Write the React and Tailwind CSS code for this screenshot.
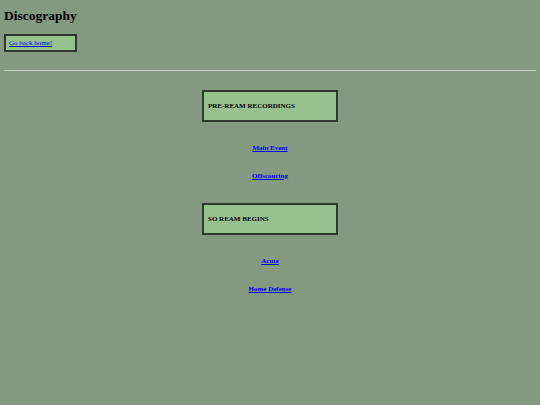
export default function App() {
  const sections = [
    { title: 'PRE-REAM RECORDINGS', records: ['Main Event', 'Offscouring'] },
    { title: 'SO REAM BEGINS', records: ['Acute', 'Home Defense'] },
  ];

  return (
    <div className="min-h-[405px] bg-[#839a80] px-1 pt-[8px] font-['Liberation_Serif',serif] text-black">
      <h1 className="text-[13.5px] font-bold leading-[16px]">Discography</h1>

      <div className="mt-[10px] w-[73px] border-2 border-[#2e3a2d] bg-[#97c18f] px-[3px] py-[3px] text-[7px] leading-[8px]">
        <a href="#" className="text-[#0000ee] underline">Go back home!</a>
      </div>

      <hr className="mt-[18px] border-t border-[#c9d2c6]" />

      <div className="flex flex-col items-center pt-[19px]">
        {sections.map((section) => (
          <div key={section.title} className="flex flex-col items-center">
            <div className="flex h-[32px] w-[136px] items-center border-2 border-[#2e3a2d] bg-[#97c18f] px-[4px] text-[7px] font-bold">
              {section.title}
            </div>
            <div className="flex flex-col items-center gap-[19px] pt-[22px] pb-[22px] text-[7px] font-bold leading-[9px]">
              {section.records.map((r) => (
                <a key={r} href="#" className="text-[#0000ee] underline">{r}</a>
              ))}
            </div>
          </div>
        ))}
      </div>
    </div>
  );
}
